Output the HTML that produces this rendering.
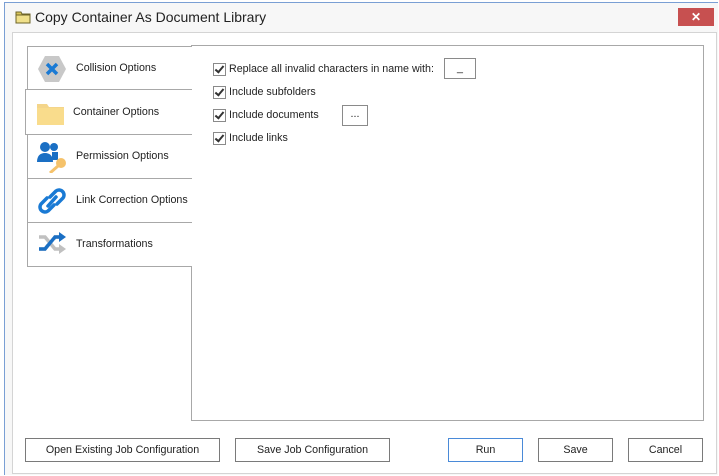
<!DOCTYPE html>
<html><head><style>
body{margin:0;width:719px;height:476px;background:#fff;position:relative;overflow:hidden;font-family:"Liberation Sans",sans-serif;font-size:10.7px;color:#222}
.a{position:absolute}
.win{left:4px;top:2px;width:713px;height:472px;border-left:1px solid #7a9fd4;border-top:1px solid #7a9fd4;background:#f7f7f7}
.inner{left:12px;top:32px;width:703px;height:440px;border:1px solid #d4d4d4;background:#fff}
.tab{left:27px;width:164px;height:43px;border:1px solid #a8a8a8;border-right:none;background:#fff}
.tab span{position:absolute;left:48px;top:15px}
.btn{border:1px solid #7a7a7a;height:22px;line-height:22px;text-align:center;background:#fff}
.cb{width:11px;height:11px;border:1px solid #8a8a8a;background:#fff}
.cb::after{content:"";position:absolute;left:3px;top:0px;width:3px;height:7px;border:solid #333;border-width:0 2px 2px 0;transform:rotate(40deg)}
</style></head><body>
<div class="a win"></div>
<svg class="a" style="left:15px;top:10px" width="16" height="14"><path d="M1 2h5l1 2h8v9H1z" fill="#d9c65a" stroke="#6e6428"/><path d="M1 5h14v8H1z" fill="#f0e08a" stroke="#6e6428"/></svg>
<div class="a" style="left:35px;top:9px;font-size:14px;color:#222">Copy Container As Document Library</div>
<div class="a" style="left:678px;top:8px;width:36px;height:18px;background:#c75050;color:#fff;text-align:center;font-size:12px;line-height:18px;font-weight:bold">✕</div>
<div class="a inner"></div>
<div class="a" style="left:191px;top:45px;width:511px;height:374px;border:1px solid #a8a8a8;background:#fff"></div>
<div class="a tab" style="top:46px"><svg class="a" style="left:9px;top:8px" width="30" height="28"><polygon points="8,1 22,1 29,14 22,27 8,27 1,14" fill="#c8c8c8"/><path d="M10 9l10 10M20 9l-10 10" stroke="#1a7ad4" stroke-width="3.5"/></svg><span>Collision Options</span></div>
<div class="a tab" style="top:89px;left:25px;width:166px;height:44px;border-color:#a8a8a8"><svg class="a" style="left:11px;top:11px" width="28" height="24"><path d="M0 3h10l2 3h15v18H0z" fill="#f4d58a"/><path d="M0 7h27v17H0z" fill="#f9dc8c"/></svg><span style="left:47px;top:16px">Container Options</span></div>
<div class="a tab" style="top:134px"><svg class="a" style="left:9px;top:6px" width="32" height="32"><circle cx="8" cy="6" r="5" fill="#1a6fc4"/><path d="M0 21c0-6 3-9 8-9s8 3 8 9z" fill="#1a6fc4"/><circle cx="17" cy="6" r="4" fill="#1a6fc4"/><rect x="15" y="11" width="6" height="8" fill="#1a6fc4"/><circle cx="24" cy="22" r="5" fill="#f5c26b"/><path d="M21 25l-8 7" stroke="#f5c26b" stroke-width="3"/></svg><span>Permission Options</span></div>
<div class="a tab" style="top:178px"><svg class="a" style="left:9px;top:6px" width="30" height="32"><path d="M13 12l6-6a5 5 0 0 1 7 7l-6 6M17 20l-6 6a5 5 0 0 1-7-7l6-6M11 21l8-9" stroke="#1a7ad4" stroke-width="3.5" fill="none" stroke-linecap="round"/></svg><span>Link Correction Options</span></div>
<div class="a tab" style="top:222px;height:43px;border-bottom:1px solid #a8a8a8"><svg class="a" style="left:9px;top:8px" width="32" height="28"><path d="M2 6h6l10 12h6M2 18h6l3-4M17 8l1-2h6" stroke="#c0c0c0" stroke-width="3.5" fill="none"/><path d="M2 18h6l10-12h6" stroke="#1a6fc4" stroke-width="3.5" fill="none"/><path d="M22 1l7 5-7 5z" fill="#1a6fc4"/><path d="M22 13l7 5-7 5z" fill="#c0c0c0"/></svg><span>Transformations</span></div>
<div class="a cb" style="left:213px;top:63px"></div><div class="a" style="left:229px;top:63px">Replace all invalid characters in name with:</div>
<div class="a" style="left:444px;top:58px;width:30px;height:19px;border:1px solid #8a8a8a;background:#fff;text-align:center;line-height:19px">_</div>
<div class="a cb" style="left:213px;top:86px"></div><div class="a" style="left:229px;top:86px">Include subfolders</div>
<div class="a cb" style="left:213px;top:109px"></div><div class="a" style="left:229px;top:109px">Include documents</div>
<div class="a" style="left:342px;top:105px;width:24px;height:19px;border:1px solid #8a8a8a;background:#fff;text-align:center;line-height:17px">...</div>
<div class="a cb" style="left:213px;top:132px"></div><div class="a" style="left:229px;top:132px">Include links</div>
<div class="a btn" style="left:25px;top:438px;width:193px">Open Existing Job Configuration</div>
<div class="a btn" style="left:235px;top:438px;width:153px">Save Job Configuration</div>
<div class="a btn" style="left:448px;top:438px;width:73px;border-color:#4a8ad8">Run</div>
<div class="a btn" style="left:538px;top:438px;width:73px">Save</div>
<div class="a btn" style="left:628px;top:438px;width:73px">Cancel</div>
</body></html>
